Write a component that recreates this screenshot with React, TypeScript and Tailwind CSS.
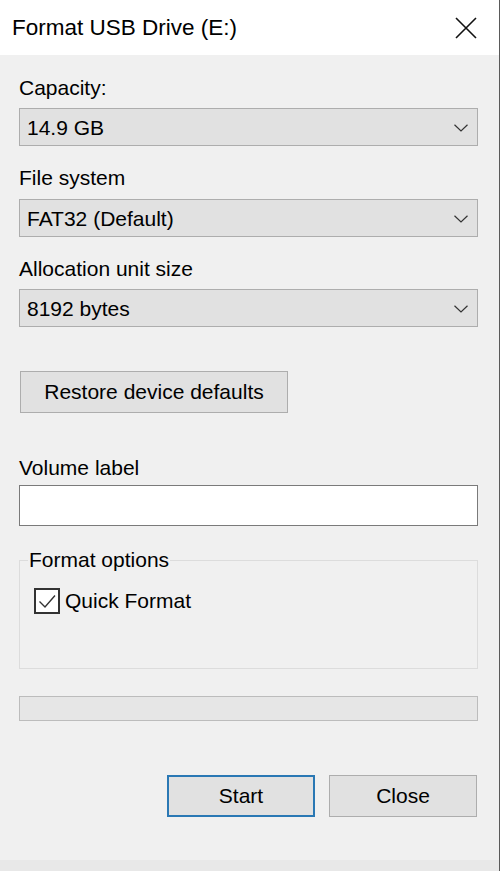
import React from "react";

const font = { fontFamily: '"Liberation Sans", Arial, sans-serif' };

function Chevron() {
  return (
    <svg width="14" height="8" viewBox="0 0 14 8" className="mr-[9px]">
      <path d="M0.5 0.8 L7 7 L13.5 0.8" fill="none" stroke="#333" strokeWidth="1.2" />
    </svg>
  );
}

function Select({ value }: { value: string }) {
  return (
    <div className="flex h-[38px] w-[459px] items-center justify-between border border-[#adadad] bg-[#e1e1e1] pl-[7px] pt-[2px]">
      <span className="text-[21px] leading-[24px] text-black">{value}</span>
      <Chevron />
    </div>
  );
}

function Label({ children, className = "" }: { children: React.ReactNode; className?: string }) {
  return <div className={`text-[21px] leading-[24px] text-black ${className}`}>{children}</div>;
}

export default function App() {
  return (
    <div className="flex h-[871px] w-[500px] flex-col border-r border-[#5a5a5a] bg-[#f0f0f0]" style={font}>
      {/* title bar */}
      <div className="flex h-[55px] items-center justify-between bg-white pl-[12px] pr-[22px]">
        <span className="pt-[1px] text-[22.5px] leading-[26px] text-black">Format USB Drive (E:)</span>
        <svg width="22" height="22" viewBox="0 0 22 22">
          <path d="M1 1 L21 21 M21 1 L1 21" stroke="#111" strokeWidth="1.6" fill="none" />
        </svg>
      </div>

      <div className="flex flex-1 flex-col pl-[19px]">
        <Label className="mt-[21px]">Capacity:</Label>
        <div className="mt-[8px]">
          <Select value="14.9 GB" />
        </div>

        <Label className="mt-[20px]">File system</Label>
        <div className="mt-[9px]">
          <Select value="FAT32 (Default)" />
        </div>

        <Label className="mt-[20px]">Allocation unit size</Label>
        <div className="mt-[8px]">
          <Select value="8192 bytes" />
        </div>

        <button className="ml-[1px] mt-[44px] flex h-[42px] w-[268px] items-center justify-center border border-[#adadad] bg-[#e1e1e1] text-[21px] leading-[24px] text-black">
          Restore device defaults
        </button>

        <Label className="mt-[43px]">Volume label</Label>
        <div className="mt-[5px] h-[41px] w-[459px] border border-[#7a7a7a] bg-white" />

        <fieldset className="mt-[22px] w-[459px] border border-[#dcdcdc] px-0 pb-0">
          <legend className="ml-[8px] px-[1px] text-[21px] leading-[24px] text-black">Format options</legend>
          <div className="flex h-[96px] items-start pl-[14px] pt-[16px]">
            <div className="flex items-center">
              <div className="flex h-[26px] w-[26px] items-center justify-center border-2 border-[#333] bg-white">
                <svg width="20" height="16" viewBox="0 0 20 16">
                  <path d="M2.5 8.5 L8 14 L18 2.5" fill="none" stroke="#333" strokeWidth="1.4" />
                </svg>
              </div>
              <span className="ml-[5px] text-[21px] leading-[24px] text-black">Quick Format</span>
            </div>
          </div>
        </fieldset>

        <div className="mt-[27px] h-[25px] w-[459px] border border-[#bcbcbc] bg-[#e6e6e6]" />

        <div className="mt-[54px] flex w-[458px] justify-end gap-[14px]">
          <button className="flex h-[42px] w-[148px] items-center justify-center border-2 border-[#2a78b4] bg-[#e1e1e1] text-[21px] leading-[24px] text-black">
            Start
          </button>
          <button className="flex h-[42px] w-[148px] items-center justify-center border border-[#adadad] bg-[#e1e1e1] text-[21px] leading-[24px] text-black">
            Close
          </button>
        </div>
      </div>
      <div className="h-[11px] bg-[#e8e8e8]" />
    </div>
  );
}
